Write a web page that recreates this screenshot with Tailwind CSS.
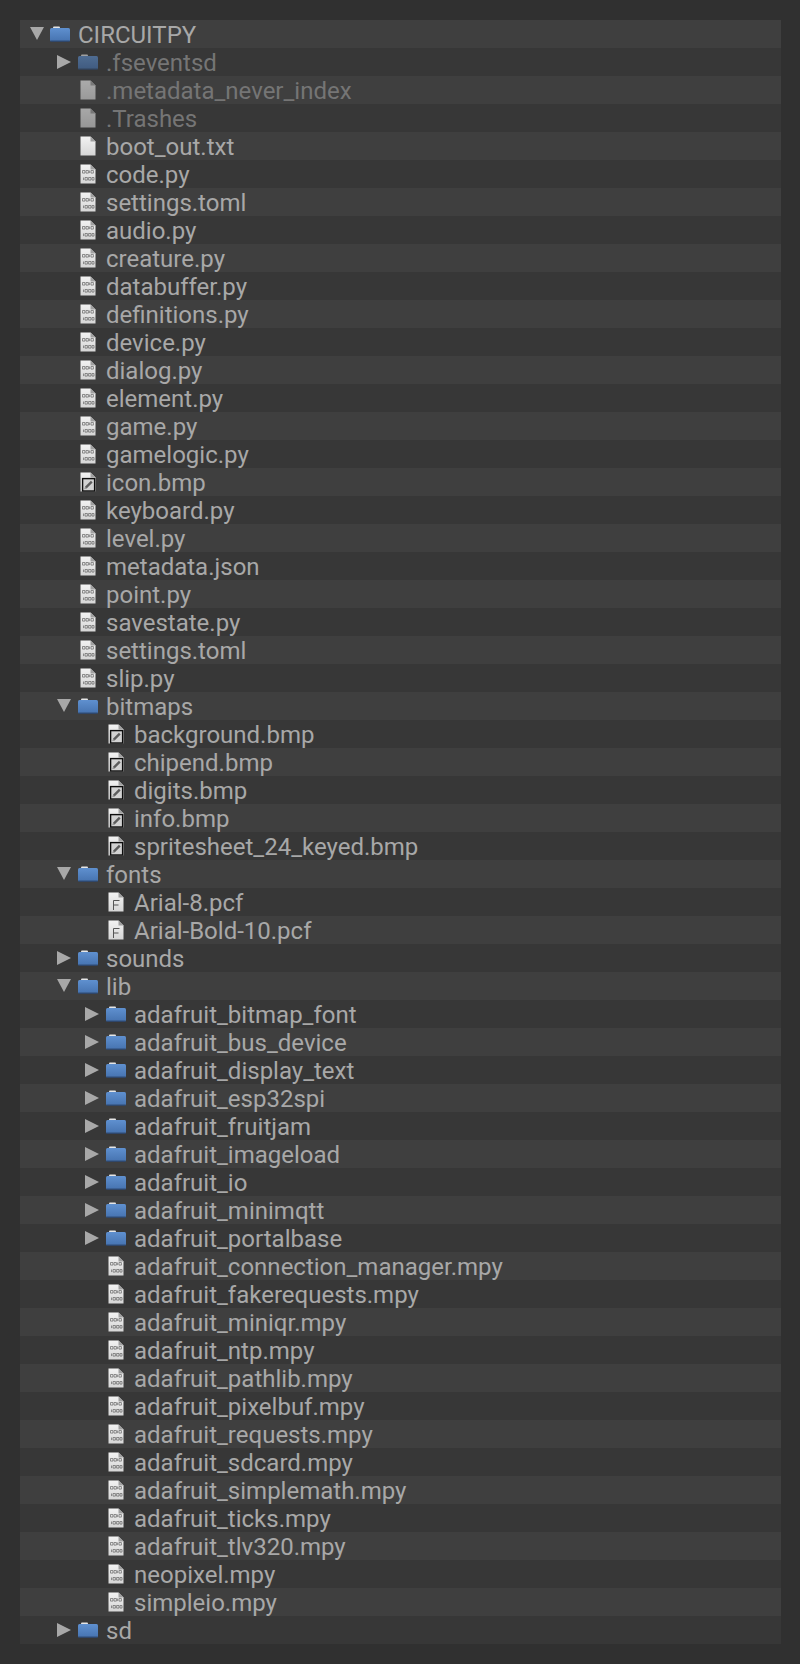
<!DOCTYPE html>
<html lang="en">
<head>
<meta charset="utf-8">
<title>CIRCUITPY</title>
<script src="https://cdn.jsdelivr.net/npm/@tailwindcss/browser@4"></script>
</head>
<body class="m-0 bg-[#303030] p-5 pr-[19px] font-['Roboto',sans-serif] text-[24px] leading-7 text-[#a8a8a8]">
<svg width="0" height="0" class="absolute">
  <defs>
    <linearGradient id="fg" x1="0" y1="0" x2="0" y2="1"><stop offset="0" stop-color="#5f90cf"/><stop offset="1" stop-color="#4673b0"/></linearGradient>
    <linearGradient id="pg" x1="0" y1="0" x2="0" y2="1"><stop offset="0" stop-color="#f2f2f2"/><stop offset="1" stop-color="#d6d6d6"/></linearGradient>
    <symbol id="folder" viewBox="0 0 20 16">
      <path d="M4 0.5h5q1 0 1 1v1H3v-1q0-1 1-1z" fill="#e6e6e6"/>
      <rect x="0" y="2" width="20" height="13.5" rx="1.5" fill="url(#fg)"/>
      <rect x="0.5" y="14.6" width="19" height="1.2" fill="#2c4468"/>
    </symbol>
    <symbol id="page" viewBox="0 0 16 20">
      <path d="M0.5 0.5H10.5L15.5 5.5V19.5H0.5z" fill="url(#pg)"/>
      <path d="M10.5 0.5V5.5H15.5z" fill="#a0a0a0"/>
    </symbol>
    <symbol id="code" viewBox="0 0 16 20">
      <path d="M0.5 0.5H10.5L15.5 5.5V19.5H0.5z" fill="url(#pg)"/>
      <path d="M10.5 0.5V5.5H15.5z" fill="#a0a0a0"/>
      <g fill="none" stroke="#666" stroke-width="0.7">
        <path d="M2.5 6.5h2.4v2.6h-2.4z M6 6.5h2.4v2.6H6z M9.6 6.5v2.6 M11 6.5h2.4v2.6H11z"/>
        <path d="M3.5 13.5v2.6 M5 13.5h2.4v2.6H5z M8.6 13.5h2.4v2.6H8.6z M12 13.5h2v2.6h-2z"/>
      </g>
    </symbol>
    <symbol id="image" viewBox="0 0 16 20">
      <path d="M0.5 0.5H10.5L15.5 5.5V19.5H0.5z" fill="url(#pg)"/>
      <path d="M10.5 0.5V5.5H15.5z" fill="#a0a0a0"/>
      <rect x="2.6" y="6.6" width="12" height="12.4" fill="#d2d2d2" stroke="#0d0d0d" stroke-width="1.4"/>
      <path d="M5.8 15.6L11.8 9.6" stroke="#5c5c5c" stroke-width="2.4"/>
      <path d="M4.2 17.2l1-2.8 1.8 1.8z" fill="#8a8a8a"/>
    </symbol>
    <symbol id="font" viewBox="0 0 16 20">
      <path d="M0.5 0.5H10.5L15.5 5.5V19.5H0.5z" fill="url(#pg)"/>
      <path d="M10.5 0.5V5.5H15.5z" fill="#a0a0a0"/>
      <path d="M5.5 18V8.5H11.5M5.5 13H10.5" fill="none" stroke="#555" stroke-width="1"/>
    </symbol>
    <symbol id="right" viewBox="0 0 14 14"><path d="M0 0L14 7L0 14z" fill="#a8a8a8"/></symbol>
    <symbol id="down" viewBox="0 0 14 14"><path d="M0 0H14L7 13z" fill="#a8a8a8"/></symbol>
  </defs>
</svg>

<ul class="flex flex-col [&>li]:flex [&>li]:h-7 [&>li]:items-center [&>li]:pt-[2px] [&>li]:whitespace-nowrap [&>li>svg]:mt-[-2px] [&>li:nth-child(odd)]:bg-[#3f3f3f] [&>li:nth-child(even)]:bg-[#373737]">
  <li class="pl-[10px]"><svg class="mr-[6px] h-[14px] w-[14px]"><use href="#down"/></svg><svg class="mr-2 h-4 w-5"><use href="#folder"/></svg>CIRCUITPY</li>
  <li class="pl-[37px] text-[#757575]"><svg class="mr-[7px] h-[14px] w-[14px]"><use href="#right"/></svg><svg class="mr-2 h-4 w-5 opacity-60"><use href="#folder"/></svg>.fseventsd</li>
  <li class="pl-[60px] text-[#757575]"><svg class="mr-[10px] h-5 w-4 opacity-60"><use href="#page"/></svg>.metadata_never_index</li>
  <li class="pl-[60px] text-[#757575]"><svg class="mr-[10px] h-5 w-4 opacity-60"><use href="#page"/></svg>.Trashes</li>
  <li class="pl-[60px]"><svg class="mr-[10px] h-5 w-4"><use href="#page"/></svg>boot_out.txt</li>
  <li class="pl-[60px]"><svg class="mr-[10px] h-5 w-4"><use href="#code"/></svg>code.py</li>
  <li class="pl-[60px]"><svg class="mr-[10px] h-5 w-4"><use href="#code"/></svg>settings.toml</li>
  <li class="pl-[60px]"><svg class="mr-[10px] h-5 w-4"><use href="#code"/></svg>audio.py</li>
  <li class="pl-[60px]"><svg class="mr-[10px] h-5 w-4"><use href="#code"/></svg>creature.py</li>
  <li class="pl-[60px]"><svg class="mr-[10px] h-5 w-4"><use href="#code"/></svg>databuffer.py</li>
  <li class="pl-[60px]"><svg class="mr-[10px] h-5 w-4"><use href="#code"/></svg>definitions.py</li>
  <li class="pl-[60px]"><svg class="mr-[10px] h-5 w-4"><use href="#code"/></svg>device.py</li>
  <li class="pl-[60px]"><svg class="mr-[10px] h-5 w-4"><use href="#code"/></svg>dialog.py</li>
  <li class="pl-[60px]"><svg class="mr-[10px] h-5 w-4"><use href="#code"/></svg>element.py</li>
  <li class="pl-[60px]"><svg class="mr-[10px] h-5 w-4"><use href="#code"/></svg>game.py</li>
  <li class="pl-[60px]"><svg class="mr-[10px] h-5 w-4"><use href="#code"/></svg>gamelogic.py</li>
  <li class="pl-[60px]"><svg class="mr-[10px] h-5 w-4"><use href="#image"/></svg>icon.bmp</li>
  <li class="pl-[60px]"><svg class="mr-[10px] h-5 w-4"><use href="#code"/></svg>keyboard.py</li>
  <li class="pl-[60px]"><svg class="mr-[10px] h-5 w-4"><use href="#code"/></svg>level.py</li>
  <li class="pl-[60px]"><svg class="mr-[10px] h-5 w-4"><use href="#code"/></svg>metadata.json</li>
  <li class="pl-[60px]"><svg class="mr-[10px] h-5 w-4"><use href="#code"/></svg>point.py</li>
  <li class="pl-[60px]"><svg class="mr-[10px] h-5 w-4"><use href="#code"/></svg>savestate.py</li>
  <li class="pl-[60px]"><svg class="mr-[10px] h-5 w-4"><use href="#code"/></svg>settings.toml</li>
  <li class="pl-[60px]"><svg class="mr-[10px] h-5 w-4"><use href="#code"/></svg>slip.py</li>
  <li class="pl-[37px]"><svg class="mr-[7px] h-[14px] w-[14px]"><use href="#down"/></svg><svg class="mr-2 h-4 w-5"><use href="#folder"/></svg>bitmaps</li>
  <li class="pl-[88px]"><svg class="mr-[10px] h-5 w-4"><use href="#image"/></svg>background.bmp</li>
  <li class="pl-[88px]"><svg class="mr-[10px] h-5 w-4"><use href="#image"/></svg>chipend.bmp</li>
  <li class="pl-[88px]"><svg class="mr-[10px] h-5 w-4"><use href="#image"/></svg>digits.bmp</li>
  <li class="pl-[88px]"><svg class="mr-[10px] h-5 w-4"><use href="#image"/></svg>info.bmp</li>
  <li class="pl-[88px]"><svg class="mr-[10px] h-5 w-4"><use href="#image"/></svg>spritesheet_24_keyed.bmp</li>
  <li class="pl-[37px]"><svg class="mr-[7px] h-[14px] w-[14px]"><use href="#down"/></svg><svg class="mr-2 h-4 w-5"><use href="#folder"/></svg>fonts</li>
  <li class="pl-[88px]"><svg class="mr-[10px] h-5 w-4"><use href="#font"/></svg>Arial-8.pcf</li>
  <li class="pl-[88px]"><svg class="mr-[10px] h-5 w-4"><use href="#font"/></svg>Arial-Bold-10.pcf</li>
  <li class="pl-[37px]"><svg class="mr-[7px] h-[14px] w-[14px]"><use href="#right"/></svg><svg class="mr-2 h-4 w-5"><use href="#folder"/></svg>sounds</li>
  <li class="pl-[37px]"><svg class="mr-[7px] h-[14px] w-[14px]"><use href="#down"/></svg><svg class="mr-2 h-4 w-5"><use href="#folder"/></svg>lib</li>
  <li class="pl-[65px]"><svg class="mr-[7px] h-[14px] w-[14px]"><use href="#right"/></svg><svg class="mr-2 h-4 w-5"><use href="#folder"/></svg>adafruit_bitmap_font</li>
  <li class="pl-[65px]"><svg class="mr-[7px] h-[14px] w-[14px]"><use href="#right"/></svg><svg class="mr-2 h-4 w-5"><use href="#folder"/></svg>adafruit_bus_device</li>
  <li class="pl-[65px]"><svg class="mr-[7px] h-[14px] w-[14px]"><use href="#right"/></svg><svg class="mr-2 h-4 w-5"><use href="#folder"/></svg>adafruit_display_text</li>
  <li class="pl-[65px]"><svg class="mr-[7px] h-[14px] w-[14px]"><use href="#right"/></svg><svg class="mr-2 h-4 w-5"><use href="#folder"/></svg>adafruit_esp32spi</li>
  <li class="pl-[65px]"><svg class="mr-[7px] h-[14px] w-[14px]"><use href="#right"/></svg><svg class="mr-2 h-4 w-5"><use href="#folder"/></svg>adafruit_fruitjam</li>
  <li class="pl-[65px]"><svg class="mr-[7px] h-[14px] w-[14px]"><use href="#right"/></svg><svg class="mr-2 h-4 w-5"><use href="#folder"/></svg>adafruit_imageload</li>
  <li class="pl-[65px]"><svg class="mr-[7px] h-[14px] w-[14px]"><use href="#right"/></svg><svg class="mr-2 h-4 w-5"><use href="#folder"/></svg>adafruit_io</li>
  <li class="pl-[65px]"><svg class="mr-[7px] h-[14px] w-[14px]"><use href="#right"/></svg><svg class="mr-2 h-4 w-5"><use href="#folder"/></svg>adafruit_minimqtt</li>
  <li class="pl-[65px]"><svg class="mr-[7px] h-[14px] w-[14px]"><use href="#right"/></svg><svg class="mr-2 h-4 w-5"><use href="#folder"/></svg>adafruit_portalbase</li>
  <li class="pl-[88px]"><svg class="mr-[10px] h-5 w-4"><use href="#code"/></svg>adafruit_connection_manager.mpy</li>
  <li class="pl-[88px]"><svg class="mr-[10px] h-5 w-4"><use href="#code"/></svg>adafruit_fakerequests.mpy</li>
  <li class="pl-[88px]"><svg class="mr-[10px] h-5 w-4"><use href="#code"/></svg>adafruit_miniqr.mpy</li>
  <li class="pl-[88px]"><svg class="mr-[10px] h-5 w-4"><use href="#code"/></svg>adafruit_ntp.mpy</li>
  <li class="pl-[88px]"><svg class="mr-[10px] h-5 w-4"><use href="#code"/></svg>adafruit_pathlib.mpy</li>
  <li class="pl-[88px]"><svg class="mr-[10px] h-5 w-4"><use href="#code"/></svg>adafruit_pixelbuf.mpy</li>
  <li class="pl-[88px]"><svg class="mr-[10px] h-5 w-4"><use href="#code"/></svg>adafruit_requests.mpy</li>
  <li class="pl-[88px]"><svg class="mr-[10px] h-5 w-4"><use href="#code"/></svg>adafruit_sdcard.mpy</li>
  <li class="pl-[88px]"><svg class="mr-[10px] h-5 w-4"><use href="#code"/></svg>adafruit_simplemath.mpy</li>
  <li class="pl-[88px]"><svg class="mr-[10px] h-5 w-4"><use href="#code"/></svg>adafruit_ticks.mpy</li>
  <li class="pl-[88px]"><svg class="mr-[10px] h-5 w-4"><use href="#code"/></svg>adafruit_tlv320.mpy</li>
  <li class="pl-[88px]"><svg class="mr-[10px] h-5 w-4"><use href="#code"/></svg>neopixel.mpy</li>
  <li class="pl-[88px]"><svg class="mr-[10px] h-5 w-4"><use href="#code"/></svg>simpleio.mpy</li>
  <li class="pl-[37px]"><svg class="mr-[7px] h-[14px] w-[14px]"><use href="#right"/></svg><svg class="mr-2 h-4 w-5"><use href="#folder"/></svg>sd</li>
</ul>
</body>
</html>
